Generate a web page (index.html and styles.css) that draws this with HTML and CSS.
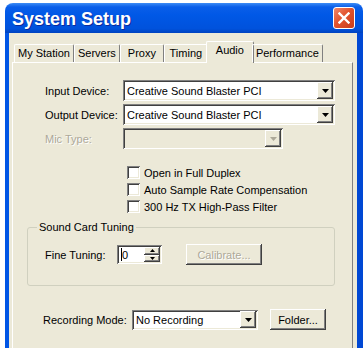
FILE: index.html
```html
<!DOCTYPE html>
<html lang="en">

<head>
    <meta charset="UTF-8">
    <title>System Setup</title>
    <link rel="stylesheet" href="styles.css">
</head>

<body>
    <div class="window">
        <div class="titlebar">
            <span class="title">System Setup</span>
            <span class="close">
                <svg width="12" height="12" viewBox="0 0 12 12">
                    <path d="M1.5 1.5 L10.5 10.5 M10.5 1.5 L1.5 10.5" stroke="#fff" stroke-width="2.4" stroke-linecap="square" fill="none"/>
                </svg>
            </span>
        </div>

        <div class="client">
            <div class="tabs">
                <div class="tab">My Station</div>
                <div class="tab">Servers</div>
                <div class="tab">Proxy</div>
                <div class="tab">Timing</div>
                <div class="tab active">Audio</div>
                <div class="tab">Performance</div>
            </div>

            <div class="panel">
                <div class="fields">
                    <div class="field">
                        <label class="field-label">Input Device:</label>
                        <div class="combo sunken device">
                            <span class="combo-text">Creative Sound Blaster PCI</span>
                            <span class="drop raised">
                                <svg width="7" height="4" viewBox="0 0 7 4"><path d="M0 0 H7 L3.5 4 Z" fill="#000"/></svg>
                            </span>
                        </div>
                    </div>
                    <div class="field">
                        <label class="field-label">Output Device:</label>
                        <div class="combo sunken device">
                            <span class="combo-text">Creative Sound Blaster PCI</span>
                            <span class="drop raised">
                                <svg width="7" height="4" viewBox="0 0 7 4"><path d="M0 0 H7 L3.5 4 Z" fill="#000"/></svg>
                            </span>
                        </div>
                    </div>
                    <div class="field">
                        <label class="field-label disabled">Mic Type:</label>
                        <div class="combo sunken mic off">
                            <span class="combo-text"></span>
                            <span class="drop raised">
                                <svg width="7" height="4" viewBox="0 0 7 4"><path d="M0 0 H7 L3.5 4 Z" fill="#aca899"/></svg>
                            </span>
                        </div>
                    </div>
                </div>

                <div class="checks">
                    <div class="check"><span class="box sunken"></span>Open in Full Duplex</div>
                    <div class="check"><span class="box sunken"></span>Auto Sample Rate Compensation</div>
                    <div class="check"><span class="box sunken"></span>300 Hz TX High-Pass Filter</div>
                </div>

                <fieldset class="group">
                    <legend>Sound Card Tuning</legend>
                    <div class="tuning">
                        <label class="tuning-label">Fine Tuning:</label>
                        <div class="spin sunken">
                            <span class="spin-text"><span class="caret"></span>0</span>
                            <span class="spin-buttons">
                                <span class="spin-btn raised">
                                    <svg width="5" height="3" viewBox="0 0 5 3"><path d="M0 3 H5 L2.5 0 Z" fill="#000"/></svg>
                                </span>
                                <span class="spin-btn raised">
                                    <svg width="5" height="3" viewBox="0 0 5 3"><path d="M0 0 H5 L2.5 3 Z" fill="#000"/></svg>
                                </span>
                            </span>
                        </div>
                        <button class="btn raised calibrate" disabled>Calibrate...</button>
                    </div>
                </fieldset>

                <div class="recording">
                    <label class="rec-label">Recording Mode:</label>
                    <div class="combo sunken rec">
                        <span class="combo-text">No Recording</span>
                        <span class="drop raised">
                            <svg width="7" height="4" viewBox="0 0 7 4"><path d="M0 0 H7 L3.5 4 Z" fill="#000"/></svg>
                        </span>
                    </div>
                    <button class="btn raised folder">Folder...</button>
                </div>
            </div>
        </div>
    </div>
</body>

</html>
```

FILE: styles.css
```css
body {
    margin: 0;
    background: #fff;
    font-family: "Liberation Sans", Arial, sans-serif;
    font-size: 11px;
    color: #000;
    overflow: hidden;
}

.window {
    margin: 3px 0 0 5px;
    width: 358px;
    height: 345px;
    display: flex;
    flex-direction: column;
    overflow: hidden;
}

/* title bar */
.titlebar {
    flex: none;
    height: 30px;
    display: flex;
    align-items: center;
    justify-content: space-between;
    padding: 0 8px 0 7px;
    border-radius: 8px 8px 0 0;
    background: linear-gradient(#3d8cf5 0, #0a5ee9 4px, #0058e6 40%, #0052dc 85%, #0043c0 100%);
}

.title {
    color: #fff;
    font-weight: bold;
    font-size: 18px;
    padding-top: 2px;
    text-shadow: 1px 1px 0 #0b2b9c;
}

.close {
    width: 22px;
    height: 22px;
    box-sizing: border-box;
    border: 1px solid #fff;
    border-radius: 3px;
    background: linear-gradient(135deg, #f0876a 0, #e2532e 45%, #c83c1c 100%);
    display: flex;
    align-items: center;
    justify-content: center;
}

/* window body */
.client {
    flex: 1;
    background: #ece9d8;
    border-left: 4px solid #0055e5;
    border-right: 6px solid #0048d4;
    padding: 8px 4px 0 3px;
}

.tabs {
    display: flex;
    align-items: flex-end;
    height: 21px;
    padding-left: 2px;
    position: relative;
    z-index: 1;
}

.tab {
    box-sizing: border-box;
    height: 18px;
    min-width: 44px;
    padding: 0 3px;
    line-height: 17px;
    text-align: center;
    border-left: 1px solid #fff;
    border-top: 1px solid #fff;
    border-right: 1px solid #808080;
    border-radius: 2px 2px 0 0;
}

.tab.active {
    min-width: 48px;
    height: 22px;
    margin: 0 -2px -1px;
    padding: 0 5px 3px;
    line-height: 17px;
    background: #ece9d8;
}

.panel {
    height: 300px;
    padding: 17px 16px 0 14px;
    border-left: 1px solid #fff;
    border-top: 1px solid #fff;
    border-right: 1px solid #808080;
}

.sunken {
    box-sizing: border-box;
    background: #fff;
    box-shadow: inset 1px 1px #808080, inset -1px -1px #fff, inset 2px 2px #404040, inset -2px -2px #ece9d8;
}

.raised {
    box-sizing: border-box;
    background: #ece9d8;
    box-shadow: inset -1px -1px #404040, inset 1px 1px #fff, inset -2px -2px #808080, inset 2px 2px #ece9d8;
}

/* device rows */
.fields {
    display: flex;
    flex-direction: column;
    gap: 3px;
    padding-left: 18px;
}

.field {
    display: flex;
    align-items: center;
}

.field-label {
    width: 78px;
}

.disabled {
    color: #aca899;
    text-shadow: 1px 1px 0 #fff;
}

.combo {
    height: 21px;
    display: flex;
    align-items: center;
    padding-left: 4px;
}

.combo.device {
    width: 212px;
}

.combo.mic {
    width: 160px;
}

.combo.off {
    background: #ece9d8;
}

.combo-text {
    flex: 1;
    white-space: nowrap;
}

.drop {
    width: 16px;
    height: 17px;
    margin-right: 2px;
    display: flex;
    align-items: center;
    justify-content: center;
}

/* checkboxes */
.checks {
    margin-top: 15px;
    padding-left: 100px;
}

.check {
    height: 17px;
    display: flex;
    align-items: center;
    gap: 4px;
}

.box {
    width: 13px;
    height: 13px;
}

/* group box */
.group {
    margin: 6px 0 0;
    width: 308px;
    box-sizing: border-box;
    padding: 0 0 20px 17px;
    border: 1px solid #d0d0bf;
    border-radius: 3px;
}

.group legend {
    margin-left: -8px;
    padding: 0 2px;
    line-height: 13px;
}

.tuning {
    margin-top: 10px;
    display: flex;
    align-items: center;
}

.tuning-label {
    width: 72px;
}

.spin {
    width: 45px;
    height: 19px;
    display: flex;
    align-items: center;
    padding: 2px 2px 2px 4px;
}

.spin-text {
    flex: 1;
    display: flex;
    align-items: center;
}

.caret {
    width: 1px;
    height: 13px;
    background: #000;
}

.spin-buttons {
    display: flex;
    flex-direction: column;
    width: 16px;
    height: 15px;
}

.spin-btn {
    flex: 1;
    display: flex;
    align-items: center;
    justify-content: center;
}

.btn {
    font: inherit;
    border: none;
    height: 21px;
    padding: 0;
    color: #000;
}

.calibrate {
    width: 76px;
    margin-left: 24px;
    color: #aca899;
    text-shadow: 1px 1px 0 #fff;
}

/* recording mode */
.recording {
    margin-top: 23px;
    padding-left: 16px;
    display: flex;
    align-items: center;
}

.rec-label {
    width: 89px;
}

.combo.rec {
    width: 126px;
    height: 20px;
}

.folder {
    width: 56px;
    margin-left: 12px;
}
```
